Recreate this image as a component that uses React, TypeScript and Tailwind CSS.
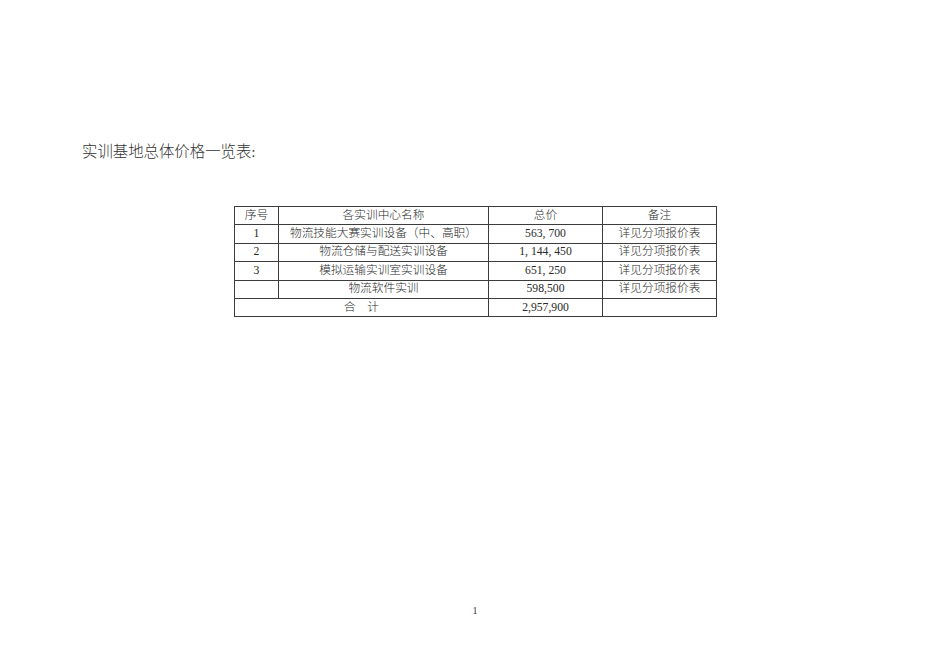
const rows = [
  { no: "1", name: "物流技能大赛实训设备（中、高职）", price: "563, 700", note: "详见分项报价表" },
  { no: "2", name: "物流仓储与配送实训设备", price: "1, 144, 450", note: "详见分项报价表" },
  { no: "3", name: "模拟运输实训室实训设备", price: "651, 250", note: "详见分项报价表" },
  { no: "", name: "物流软件实训", price: "598,500", note: "详见分项报价表" },
];

const cell = "border border-[#3c3c3c] h-[18.4px] p-0 text-center align-middle leading-[12px]";

export default function App() {
  return (
    <div
      className="w-[950px] h-[672px] bg-white text-[#2a2a2a] font-light flex flex-col"
      style={{ fontFamily: '"Liberation Serif", "Noto Sans CJK SC", serif' }}
    >
      <h1 className="ml-[82px] mt-[144px] text-[15.4px] leading-[16px] font-light text-[#333]">
        实训基地总体价格一览表:
      </h1>

      <table className="ml-[234px] mt-[46px] w-[482px] table-fixed border-collapse text-[11.7px]">
        <colgroup>
          <col className="w-[44px]" />
          <col className="w-[210px]" />
          <col className="w-[114px]" />
          <col className="w-[114px]" />
        </colgroup>
        <tbody>
          <tr>
            <td className={cell}>序号</td>
            <td className={cell}>各实训中心名称</td>
            <td className={cell}>总价</td>
            <td className={cell}>备注</td>
          </tr>
          {rows.map((r, i) => (
            <tr key={i}>
              <td className={cell}>{r.no}</td>
              <td className={cell}>{r.name}</td>
              <td className={cell}>{r.price}</td>
              <td className={cell}>{r.note}</td>
            </tr>
          ))}
          <tr>
            <td className={cell} colSpan={2}>
              合　计
            </td>
            <td className={cell}>2,957,900</td>
            <td className={cell}></td>
          </tr>
        </tbody>
      </table>

      <div className="mt-auto mb-[56px] text-center text-[10px] leading-[10px] text-[#333]">1</div>
    </div>
  );
}
